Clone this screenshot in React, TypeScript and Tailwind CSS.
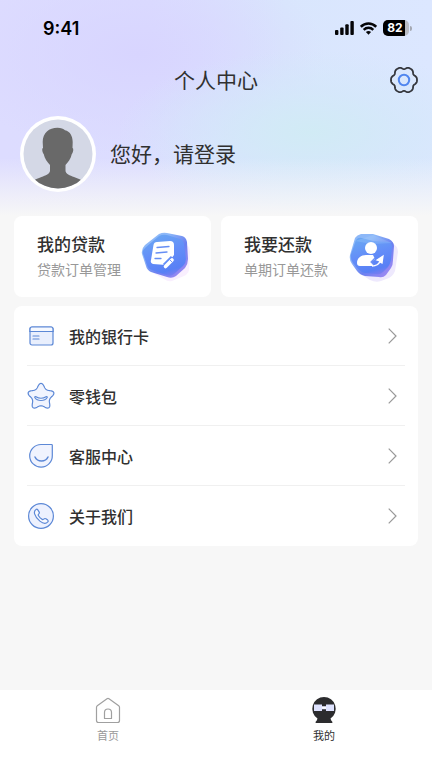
import React from "react";

function wavePath(cx: number, cy: number, radius: (angle: number) => number) {
  return (
    Array.from({ length: 120 }, (_, i) => {
      const a = (i / 120) * Math.PI * 2;
      const r = radius(a);
      return `${i ? "L" : "M"}${(cx + r * Math.cos(a)).toFixed(2)} ${(cy + r * Math.sin(a)).toFixed(2)}`;
    }).join("") + "Z"
  );
}

const gearPath = wavePath(15, 15, (a) => 12.2 + 1.05 * Math.cos(6 * a) - 0.25 * Math.cos(12 * a));
const starPath = wavePath(14, 14.8, (a) => {
  const t = a + Math.PI / 2;
  return 10.9 + 2.2 * Math.cos(5 * t) + 0.35 * Math.cos(10 * t);
});

function StatusBar() {
  return (
    <div className="flex h-14 items-center justify-between pr-5 pl-[43px]">
      <span className="pt-px font-['Inter',sans-serif] text-lg font-semibold text-black">9:41</span>
      <div className="flex items-center gap-[6px]">
        <svg width="19" height="14" viewBox="0 0 19 14" fill="#050507" aria-hidden="true">
          <rect x="0" y="9" width="3.4" height="5" rx="1" />
          <rect x="5.2" y="6.5" width="3.4" height="7.5" rx="1" />
          <rect x="10.3" y="3.2" width="3.4" height="10.8" rx="1" />
          <rect x="15.4" y="0" width="3.4" height="14" rx="1" />
        </svg>
        <svg width="17" height="13" viewBox="0 0 17 13" fill="none" stroke="#050507" strokeWidth="2.5" aria-hidden="true">
          <path d="M.8 4.8C5.1.4 11.9.4 16.2 4.8" />
          <path d="M3.7 7.8C6.4 5.2 10.6 5.2 13.3 7.8" />
          <path d="M8.5 12.7 5.9 10.1Q8.5 7.8 11.1 10.1Z" fill="#050507" stroke="none" />
        </svg>
        <div className="flex items-center gap-px">
          <div className="flex h-4 w-[26px] overflow-hidden rounded-[5px] bg-[#b9bcc4]">
            <span className="w-[22px] bg-black pl-0.5 text-center font-['Inter',sans-serif] text-xs leading-4 font-bold text-white">82</span>
          </div>
          <div className="h-[5px] w-0.5 rounded-r-full bg-[#a4a8b3]" />
        </div>
      </div>
    </div>
  );
}

function Avatar() {
  return (
    <svg width="76" height="76" viewBox="0 0 76 76" aria-hidden="true">
      <defs>
        <clipPath id="face">
          <circle cx="38" cy="38" r="34.5" />
        </clipPath>
      </defs>
      <circle cx="38" cy="38" r="38" fill="#fff" />
      <circle cx="38" cy="38" r="34.5" fill="#d4d8e6" />
      <path
        clipPath="url(#face)"
        fill="#696969"
        d="M37.5 11.800C41 11.800 43.500 12.800 45 14.200C50 15.200 52.600 20 52.700 26L52.500 32C53.800 32.200 53.300 36.500 51.800 38C51 42.500 48 46.500 45.500 49V54.500C45.500 58 50 59.500 54 61C58.500 62.500 61.500 64 63.500 66V76H12V66C14 64 17 62.500 21.500 61C25.500 59.500 30 58 30 54.500V49C27.500 46.500 24.500 42.500 23.700 38C22.200 36.500 21.700 32.200 23 32L22.700 26C22.700 17 29 11.800 37.500 11.800Z"
      />
    </svg>
  );
}

function Badge({ id, children }: { id: string; children: React.ReactNode }) {
  return (
    <svg width="56" height="56" viewBox="0 0 56 56" className="shrink-0" aria-hidden="true">
      <defs>
        <linearGradient id={id} x1="0.35" y1="0" x2="0.7" y2="1">
          <stop offset="0" stopColor="#69a5f3" />
          <stop offset="0.45" stopColor="#638df8" />
          <stop offset="0.85" stopColor="#5880f5" />
          <stop offset="1" stopColor="#7d7df0" />
        </linearGradient>
        <linearGradient id={id + "-edge"} x1="0" y1="0" x2="1" y2="1">
          <stop offset="0.3" stopColor="#8db8f8" />
          <stop offset="0.6" stopColor="#6a80f0" />
          <stop offset="1" stopColor="#ad8cf3" />
        </linearGradient>
      </defs>
      {children}
    </svg>
  );
}

function LoanIcon() {
  return (
    <Badge id="loan">
      <path d="M22 9 46 15Q51 17 51 23L50 41Q49 45 45 47L33 52Q29 53 25 50L14 44Z" fill="#f9effe" />
      <g transform="translate(0 1)">
        <path d="M20 4Q24 2 28 3L43 6Q47 7 48 12L49 29Q49 34 46 38L37 46Q33 49 28 47L12 42Q8 40 7 36L3 24Q2 19 6 15Z" fill="url(#loan-edge)" />
        <path d="M20 6Q24 4 28 5L41 9Q44 10 45 14L47 29Q47 33 44 36L35 44Q32 47 27 45L13 40Q9 39 8 35L4 24Q3 20 7 17Z" fill="url(#loan)" />
        <path d="M18 12 31 11Q35 11 35 15L35 25Q32 29 27 35L14 34Q11 33 12 30L14.500 15Q15 12 18 12Z" fill="#fff" />
        <path d="m18 17.500 12-1M17 23l11-1M16 28.500l6 0" stroke="#668ef4" strokeWidth="1.300" strokeLinecap="round" />
        <path d="m26 36 8-8" stroke="#638df8" strokeWidth="6" />
        <path d="m26.500 36.500 6.500-6.500" stroke="#fff" strokeWidth="3.600" strokeLinecap="round" />
        <path d="m30.500 29.500 3 3" stroke="#7899f6" strokeWidth="1" />
      </g>
    </Badge>
  );
}

function RepayIcon() {
  return (
    <Badge id="repay">
      <path d="M19 9 46 14Q52 17 52 23L49 42Q47 47 43 49L35 52Q30 54 24 51L13 44Z" fill="#eee9fd" />
      <g transform="translate(0 1)">
        <path d="M9 8Q11 5 15 4L27 4 43 9Q48 12 48 16L47 30Q47 35 45 38L40 45Q37 48 33 47L19 46Q14 45 11 41L6 34Q3 30 4 25Z" fill="url(#repay-edge)" />
        <path d="M10 10Q12 7 16 8L27 11 43 12Q46 13 46 17L45 30Q44 34 42 37L37 42Q34 45 30 44L19 43Q15 42 12 39L7 33Q4 29 5 24Z" fill="url(#repay)" />
        <path d="m9 11 18-6 19 8-20 1Z" fill="#b4dbff" opacity=".22" />
        <circle cx="25" cy="18" r="6" fill="#fff" />
        <path d="M11 33c0-5 4-8 9-8h7l2 4-4 3 4 4H14q-3 0-3-3Z" fill="#fff" />
        <path d="M26 36c4 0 7-2 8-5l-3-1 6-4-1 7-2-1c-2 3-5 4-8 4Z" fill="#fff" stroke="#fff" strokeWidth="1.300" />
        <path d="m29 28-4 4 3 3" fill="none" stroke="#6d91f6" strokeWidth="1.200" />
      </g>
    </Badge>
  );
}

function ServiceCard({ title, detail, icon }: { title: string; detail: string; icon: React.ReactNode }) {
  return (
    <button type="button" className="flex h-[81px] flex-1 items-center justify-between rounded-lg bg-white pr-4 pl-[23px] text-left">
      <span className="flex flex-col pb-0.5">
        <span className="text-[17px] leading-[26px] font-medium text-[#303030]">{title}</span>
        <span className="text-sm leading-6 text-[#989898]">{detail}</span>
      </span>
      {icon}
    </button>
  );
}

const menu = [
  {
    label: "我的银行卡",
    icon: (
      <>
        <rect x="3" y="5" width="23" height="18" rx="2" fill="#e9effd" />
        <path d="M3 9.500V7q0-2 2-2h19q2 0 2 2v2.500" fill="#f6f9ff" />
        <path d="M3 9.500h23M6 14h6M6 17h6" />
      </>
    ),
  },
  {
    label: "零钱包",
    icon: (
      <>
        <path fill="#f1f4fe" d={starPath} />
        <path d="M8.500 14.500q5.500 3.500 11 0 1 0 .7 1c-2.500 4-9.900 4-12.400 0q-.3-1 .7-1Z" fill="#fff" />
      </>
    ),
  },
  {
    label: "客服中心",
    icon: (
      <>
        <path d="M14 2.500H24.500q.8 0 .8.800V13.500A11.300 11.300 0 1 1 14 2.500Z" fill="#f0f3fe" />
        <path d="M8 15c2.500 5.300 10.500 5.300 13 0" strokeWidth="1.500" />
      </>
    ),
  },
  {
    label: "关于我们",
    icon: (
      <>
        <circle cx="14" cy="14" r="12.400" fill="#edf1fe" />
        <path d="M9 7.500q1-.7 1.800.4l1.400 2.200q.5 1-.4 1.800-1 .8-.3 1.900 1.400 2.400 3.700 3.600 1 .5 1.700-.4.900-.9 2-.2l1.800 1.300q1 .9.100 1.800c-2 2.200-5 1.500-7.900-.8-2.500-2-4.500-4.600-5.300-7.300-.5-2-.1-3.400 1.400-4.300Z" fill="#f9faff" />
      </>
    ),
  },
];

export default function App() {
  return (
    <div className="flex min-h-screen flex-col bg-[#f7f7f7] font-['Noto_Sans_CJK_SC',sans-serif] text-[#303030]">
      <header className="bg-[linear-gradient(to_bottom,transparent_73%,#f7f7f7_100%),radial-gradient(ellipse_at_72%_61%,#d1ebf5_0%,#d3e8f9a0_22%,transparent_44%),radial-gradient(ellipse_at_32%_25%,#d8d5ff_0%,transparent_45%),linear-gradient(90deg,#dddcff_0%,#dcddff_35%,#d9e6fd_66%,#dce7ff_100%)] pb-6">
        <StatusBar />
        <div className="grid h-12 grid-cols-[1fr_auto_1fr] items-center px-[13px]">
          <h1 className="col-start-2 pb-0.5 text-[21px] leading-8">个人中心</h1>
          <button type="button" aria-label="设置" className="justify-self-end">
            <svg width="30" height="30" viewBox="0 0 30 30" fill="none" strokeWidth="1.800" aria-hidden="true">
              <path d={gearPath} stroke="#34363c" strokeLinejoin="round" />
              <circle cx="15" cy="15" r="5.200" stroke="#5186ef" strokeWidth="2" />
            </svg>
          </button>
        </div>
        <div className="mt-3 flex items-center gap-[14px] px-5">
          <Avatar />
          <a href="#login" className="pb-0.5 text-[21px] leading-8">您好，请登录</a>
        </div>
      </header>

      <main className="flex flex-1 flex-col gap-[9px] px-[14px]">
        <div className="flex gap-[10px]">
          <ServiceCard title="我的贷款" detail="贷款订单管理" icon={<LoanIcon />} />
          <ServiceCard title="我要还款" detail="单期订单还款" icon={<RepayIcon />} />
        </div>
        <ul className="rounded-lg bg-white px-[13px]">
          {menu.map((item) => (
            <li key={item.label} className="border-b border-[#f0f0f0] last:border-transparent">
              <button type="button" className="flex h-[59px] w-full items-center pr-2 text-left">
                <svg width="28" height="28" viewBox="0 0 28 28" fill="none" stroke="#5c88d6" strokeWidth="1.200" strokeLinecap="round" strokeLinejoin="round" aria-hidden="true">
                  {item.icon}
                </svg>
                <span className="ml-[14px] flex-1 text-base font-medium">{item.label}</span>
                <svg width="9" height="16" viewBox="0 0 9 16" fill="none" stroke="#999" strokeWidth="1.200" aria-hidden="true">
                  <path d="m.7.700 7.300 7.300-7.300 7.300" />
                </svg>
              </button>
            </li>
          ))}
        </ul>
      </main>

      <nav className="grid h-[78px] grid-cols-2 bg-white text-[11px]">
        <a href="#home" className="flex flex-col items-center gap-0.5 pt-[7px] text-[#999]">
          <svg width="28" height="28" viewBox="0 0 28 28" fill="none" stroke="#a0a0a0" strokeWidth="1.200" strokeLinejoin="round" aria-hidden="true">
            <path d="M2.500 10.300q0-1 .8-1.600L13 1.700q1-.7 2 0l9.700 7q.8.600.8 1.600V23.500q0 2-2 2h-19q-2 0-2-2Z" />
            <path d="M10.500 21.500v-6a3.500 3.500 0 0 1 7 0v6Z" />
          </svg>
          <span className="leading-4">首页</span>
        </a>
        <a href="#me" aria-current="page" className="flex flex-col items-center gap-0.5 pt-[7px] text-[#303030]">
          <svg width="28" height="28" viewBox="0 0 28 28" aria-hidden="true">
            <path d="M14 0a11.800 11.800 0 0 1 6.500 21.600Q21 23.800 22.500 25q.2 1-.8 1H6.300q-1 0-.8-1 1.500-1.200 2-3.400A11.800 11.800 0 0 1 14 0Z" fill="#2c2c2e" />
            <path d="M4 7.500h8v1.800h4V7.500h8V14h-8v-1.800h-4V14H4Z" fill="#dfe3ff" />
            <path d="M12 9.800h4v1.800h-4Z" fill="#fff" />
          </svg>
          <span className="leading-4">我的</span>
        </a>
      </nav>
    </div>
  );
}
